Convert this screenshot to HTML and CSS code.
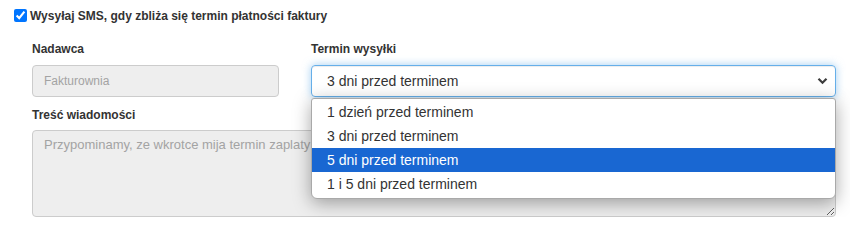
FILE: index.html
```html
<!DOCTYPE html>
<html lang="pl">

<head>
    <meta charset="UTF-8">
    <meta name="viewport" content="width=device-width, initial-scale=1.0">
    <title>Przypomnienia SMS</title>
    <link rel="stylesheet" href="styles.css">
</head>

<body>
    <div class="sms-settings">
        <label class="sms-toggle">
            <input type="checkbox" checked>
            <span>Wysyłaj SMS, gdy zbliża się termin płatności faktury</span>
        </label>

        <div class="sms-fields">
            <div class="field">
                <div class="field-label">Nadawca</div>
                <input class="field-input" type="text" placeholder="Fakturownia" disabled>
            </div>

            <div class="field">
                <div class="field-label">Termin wysyłki</div>
                <div class="select-wrap">
                    <div class="select-box">
                        <span>3 dni przed terminem</span>
                        <svg class="select-arrow" width="11" height="8" viewBox="0 0 11 8">
                            <path d="M1.5 1.8 L5.5 5.8 L9.5 1.8" fill="none" stroke="#3c3c3c" stroke-width="2.2" />
                        </svg>
                    </div>
                    <ul class="select-options">
                        <li>1 dzień przed terminem</li>
                        <li>3 dni przed terminem</li>
                        <li class="selected">5 dni przed terminem</li>
                        <li>1 i 5 dni przed terminem</li>
                    </ul>
                </div>
            </div>

            <div class="field field-wide">
                <div class="field-label">Treść wiadomości</div>
                <textarea class="field-textarea" placeholder="Przypominamy, ze wkrotce mija termin zaplaty faktury" disabled></textarea>
            </div>
        </div>
    </div>
</body>

</html>
```

FILE: styles.css
```css
* {
    box-sizing: border-box;
}

body {
    margin: 0;
    font-family: 'Liberation Sans', Arial, sans-serif;
    background: #fff;
    color: #333;
}

.sms-settings {
    padding: 6px 0 0 10px;
}

.sms-toggle {
    display: flex;
    align-items: center;
    font-size: 12px;
    font-weight: bold;
    color: #333;
    line-height: 14px;
}

.sms-toggle input {
    width: 13px;
    height: 13px;
    margin: 3px 3px 3px 4px;
}

.sms-fields {
    display: grid;
    grid-template-columns: 247px 525px;
    column-gap: 32px;
    row-gap: 11px;
    padding-left: 22px;
    margin-top: 17px;
}

.field-wide {
    grid-column: 1 / -1;
}

.field-label {
    font-size: 12px;
    font-weight: bold;
    line-height: 14px;
    color: #333;
    margin-bottom: 9px;
}

.field-wide .field-label {
    margin-bottom: 8px;
}

.field-input,
.field-textarea {
    display: block;
    width: 100%;
    background: #eee;
    border: 1px solid #ccc;
    border-radius: 4px;
    font-family: 'Liberation Sans', Arial, sans-serif;
    font-size: 12px;
    color: #999;
}

.field-input {
    height: 32px;
    padding: 6px 11px;
}

.field-textarea {
    height: 87px;
    padding: 4px 11px;
    resize: vertical;
    font-size: 13px;
    line-height: 19px;
}

.field-input::placeholder,
.field-textarea::placeholder {
    color: #a3a3a3;
}

.select-wrap {
    position: relative;
}

.select-box {
    height: 32px;
    display: flex;
    align-items: center;
    justify-content: space-between;
    padding: 0 7px 0 15px;
    border: 1px solid #66afe9;
    border-radius: 4px;
    font-size: 14px;
    color: #333;
    box-shadow: inset 0 1px 1px rgba(0, 0, 0, 0.075), 0 0 8px rgba(102, 175, 233, 0.6);
}

.select-options {
    position: absolute;
    top: 33px;
    left: 0;
    right: 0;
    margin: 0;
    padding: 1px 0 2px;
    list-style: none;
    background: #fff;
    border: 1px solid #a9a9a9;
    border-radius: 3px 3px 6px 6px;
    box-shadow: 0 4px 18px rgba(0, 0, 0, 0.35);
    font-size: 14px;
    color: #333;
    z-index: 5;
}

.select-options li {
    height: 24px;
    line-height: 24px;
    padding-left: 15px;
}

.select-options li.selected {
    background: #1967d2;
    color: #fff;
}
```
